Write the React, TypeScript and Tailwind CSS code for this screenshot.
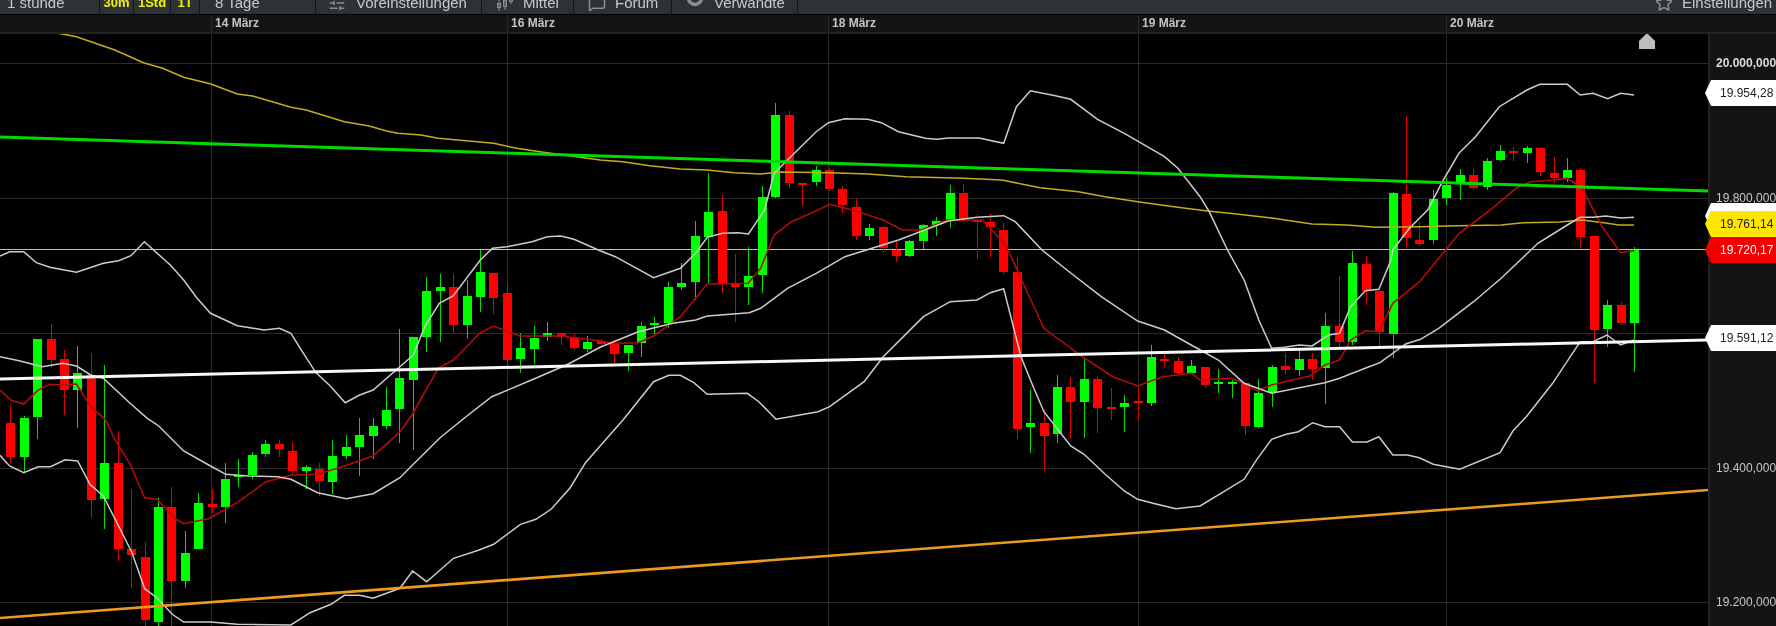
import { SlidersHorizontal, MessageSquare, Star } from "lucide-react";

// wick top, body top, body bottom, wick bottom, 1 = green / 0 = red
type Candle = [number, number, number, number, number];

const CANDLES: Candle[] = [
    [405, 423, 457, 463, 0], [416, 418, 457, 473, 1], [339, 339, 417, 439, 1], [324, 339, 360, 368, 0],
    [350, 359, 390, 415, 0], [346, 373, 390, 428, 1], [353, 375, 500, 518, 0], [365, 463, 499, 529, 1],
    [431, 463, 549, 561, 0], [489, 549, 555, 588, 0], [542, 557, 620, 626, 0], [498, 507, 622, 626, 1],
    [487, 507, 581, 626, 0], [531, 553, 581, 588, 1], [493, 503, 549, 549, 1], [489, 504, 507, 513, 0],
    [463, 479, 507, 523, 1], [459, 475, 477, 487, 1], [452, 455, 475, 479, 1], [440, 444, 454, 457, 1],
    [440, 444, 449, 457, 0], [442, 451, 471, 475, 0], [465, 467, 471, 489, 1], [463, 469, 481, 496, 0],
    [440, 456, 482, 494, 1], [435, 447, 456, 459, 1], [418, 435, 447, 476, 1], [418, 426, 436, 459, 1],
    [387, 410, 426, 429, 1], [329, 378, 409, 443, 1], [337, 337, 380, 450, 1], [277, 291, 337, 352, 1],
    [274, 287, 291, 342, 1], [274, 287, 325, 333, 0], [280, 296, 325, 339, 1], [250, 272, 297, 312, 1],
    [273, 273, 298, 314, 0], [282, 293, 360, 366, 0], [333, 348, 359, 373, 1], [326, 338, 349, 364, 1],
    [322, 333, 337, 341, 1], [333, 333, 337, 345, 0], [334, 338, 348, 350, 0], [336, 342, 349, 352, 1],
    [339, 341, 344, 346, 0], [340, 343, 354, 363, 0], [345, 345, 353, 371, 1], [322, 326, 343, 357, 1],
    [317, 323, 325, 336, 1], [282, 287, 323, 328, 1], [263, 283, 287, 290, 1], [221, 236, 282, 300, 1],
    [173, 212, 237, 283, 1], [195, 211, 283, 293, 0], [254, 284, 287, 322, 0], [247, 276, 287, 305, 1],
    [186, 197, 275, 293, 1], [103, 115, 197, 198, 1], [111, 115, 183, 188, 0], [183, 183, 184, 206, 0],
    [166, 170, 182, 186, 1], [168, 170, 189, 191, 0], [186, 189, 205, 213, 0], [199, 207, 236, 240, 0],
    [224, 228, 236, 240, 1], [226, 227, 248, 252, 0], [240, 250, 256, 262, 0], [240, 241, 256, 257, 1],
    [224, 225, 241, 249, 1], [217, 221, 225, 236, 1], [185, 193, 220, 228, 1], [184, 193, 219, 223, 0],
    [220, 220, 221, 259, 0], [214, 222, 227, 257, 0], [223, 230, 272, 274, 0], [257, 272, 429, 439, 0],
    [390, 423, 427, 453, 1], [410, 423, 436, 471, 0], [375, 387, 434, 443, 1], [377, 387, 402, 439, 0],
    [357, 379, 402, 438, 1], [377, 379, 408, 433, 0], [388, 407, 409, 420, 0], [395, 403, 407, 432, 1],
    [388, 401, 402, 420, 0], [345, 357, 403, 406, 1], [353, 359, 361, 367, 0], [357, 361, 373, 374, 0],
    [360, 366, 373, 374, 1], [367, 367, 385, 388, 0], [369, 382, 384, 393, 1], [380, 382, 383, 398, 1],
    [383, 383, 426, 435, 0], [379, 393, 427, 428, 1], [365, 367, 393, 407, 1], [353, 366, 370, 374, 0],
    [350, 359, 370, 376, 1], [353, 359, 369, 380, 0], [313, 326, 368, 404, 1], [276, 326, 342, 347, 0],
    [251, 263, 342, 345, 1], [256, 264, 291, 305, 0], [291, 291, 332, 349, 0], [192, 193, 334, 358, 1],
    [116, 194, 238, 248, 0], [222, 240, 244, 246, 0], [190, 199, 240, 244, 1], [178, 185, 198, 205, 1],
    [169, 175, 184, 200, 1], [169, 175, 188, 190, 0], [158, 161, 187, 190, 1], [145, 151, 160, 161, 1],
    [147, 151, 153, 161, 0], [146, 148, 153, 163, 1], [148, 148, 172, 176, 0], [157, 173, 178, 183, 0],
    [158, 170, 178, 182, 1], [168, 170, 237, 248, 0], [236, 236, 330, 383, 0], [300, 305, 329, 347, 1],
    [302, 305, 323, 325, 0], [247, 250, 323, 372, 1],
];

// line pieces were read off crops of the chart: [x0, y0, x scale, "x,y x,y ..."]
type Piece = [number, number, number, string];
const L = 0.3827;
const R = 0.3673;

const YELLOW: Piece[] = [
    [0, 0, L, "145,98 200,110 300,150 375,188 425,205 480,232 551,252 620,282 660,288 760,322 800,330 900,365 965,378 1010,393 1040,400 1100,405 1145,415 1290,430 1350,445 1420,457 1568,480"],
    [600, 0, L, "60,485 130,497 210,507 280,510 350,518 420,522 470,516 600,518 700,522 800,530 950,535 1050,540 1150,563 1250,575 1320,590 1405,605 1500,620"],
    [1200, 210, R, "20,3 100,12 200,25 305,42 400,45 480,52 600,50 700,47 820,45 880,38 980,36 1040,30 1100,38 1140,45 1182,45"],
];

const UPPER: Piece[] = [
    [0, 210, L, "0,138 25,125 62,125 95,158 130,172 200,187 270,160 310,152 342,137 377,95 445,165 480,210 515,265 550,310 620,347 690,360 730,355 760,370 790,425 825,487 865,530 902,578 940,555 975,540 1045,470 1080,435 1110,350 1148,280 1184,258 1255,150 1287,115 1325,110 1390,95 1430,80 1465,78 1500,88 1568,122"],
    [600, 210, L, "40,140 140,203 210,175 250,130 280,82 320,70 360,68 388,72 430,0"],
    [600, 0, L, "455,520 490,480 565,395 597,368 640,356 700,358 735,368 780,395 850,415 880,418 910,414 990,414 1055,430 1088,320 1125,272 1190,287 1230,298 1300,358 1370,400 1475,470 1510,505 1568,590"],
    [1200, 210, R, "25,5 75,120 120,210 160,330 195,415 230,412 270,405 305,408 350,375 380,370 410,290 450,242 487,238 520,150 525,120 570,55 620,0"],
    [1200, 0, R, "660,545 705,460 750,410 815,320 890,270 925,253 1000,253 1035,285 1070,280 1110,296 1145,280 1182,285"],
];

const LOWER: Piece[] = [
    [0, 416, L, "0,118 25,150 62,170 100,152 132,152 170,131 203,135 235,205 270,240 310,330 345,410 378,518 410,545 450,595 480,618 550,618 620,625 760,627 810,590 865,565 900,538 940,538 975,547 1045,517 1078,465 1115,497 1185,427 1250,403 1290,385 1360,325 1400,310 1440,280 1490,215 1530,140 1568,90"],
    [600, 210, L, "60,630 140,515 180,496 210,496 245,518 280,553 385,550 415,575 460,628 570,605 600,590 690,515 740,440 845,320 915,275 985,270 1020,248 1055,236 1100,440 1130,525 1160,605"],
    [600, 416, L, "1230,90 1265,115 1320,175 1370,225 1405,250 1450,263 1505,278 1568,270"],
    [1200, 416, R, "120,190 155,130 195,70 235,55 268,47 307,20 340,32 380,32 415,78 455,78 487,62 525,117 565,117 597,125 635,145 707,160 817,110 852,45 890,0"],
    [1200, 210, R, "960,520 1035,395 1070,395 1108,375 1145,405 1182,390"],
];

const MID: Piece[] = [
    [0, 210, L, "0,440 50,452 110,470 165,460 200,468 237,495 270,505 340,580 385,625"],
    [0, 416, L, "415,30 480,105 550,150 590,175 650,180 725,182 760,190 830,230 905,248 975,233 1045,185 1080,145 1150,65 1220,0"],
    [0, 210, L, "1285,560 1395,507 1480,465 1568,412"],
    [600, 210, L, "100,365 190,340 250,330 280,318 390,308 420,295 490,235 565,190 640,140 780,90 910,33 985,22 1055,17 1085,35 1155,120 1220,180 1310,260 1405,333 1475,360 1568,420"],
    [1200, 210, R, "50,450 120,520 195,550 340,518 380,505 460,470 490,458 560,402 600,388 650,355 745,275 820,205 920,100 1000,45 1035,22 1070,22 1105,18 1145,24 1182,22"],
];

const MA: Piece[] = [
    [0, 210, L, "0,540 28,570 62,582 100,540 130,523 165,525 200,522 237,590 275,628"],
    [0, 416, L, "300,70 340,145 378,245 410,250 460,310 480,323 545,308 620,260 695,197 760,178 830,175 900,150 975,120 1045,48 1075,0"],
    [0, 210, L, "1145,475 1185,450 1255,368 1289,348 1358,378 1465,378 1568,392"],
    [600, 210, L, "35,400 100,398 140,378 210,320 280,222 387,220 420,175 455,75 500,35 570,0"],
    [600, 0, L, "600,613 660,630"],
    [600, 210, L, "740,30 790,60 840,60 910,30 1000,30 1060,105 1120,255 1160,355 1260,440 1340,500 1405,528 1470,500 1545,490 1568,510"],
    [1200, 210, R, "85,505 121,520 155,542 195,525 300,497 340,465 380,450 410,390 450,362 487,365 525,280 598,215 706,70 790,0"],
    [1200, 0, R, "860,565 900,545 960,540 1000,535 1040,565"],
    [1200, 210, R, "1095,50 1145,128 1182,122"],
];

const points = (pieces: Piece[]) =>
    pieces
        .map(([x0, y0, sx, d]) =>
            d
                .split(" ")
                .map((p) => {
                    const [x, y] = p.split(",").map(Number);
                    return `${(x0 + x * sx).toFixed(1)},${(y0 + y / 3).toFixed(1)}`;
                })
                .join(" ")
        )
        .join(" ");

function Chart() {
    return (
        <svg width={1708} height={592} viewBox="0 34 1708 592" className="block shrink-0">
            {/* grid */}
            {[63, 198, 333, 468, 602].map((y) => (
                <line key={y} x1={0} x2={1708} y1={y + 0.5} y2={y + 0.5} stroke="#2a2a2a" />
            ))}
            {[211, 507, 828, 1138, 1446].map((x) => (
                <line key={x} x1={x + 0.5} x2={x + 0.5} y1={34} y2={626} stroke="#2a2a2a" />
            ))}
            <line x1={0} x2={1708} y1={249.5} y2={249.5} stroke="#c0c0c0" />

            {/* candles */}
            {CANDLES.map(([top, open, close, bot, up], i) => {
                const x = Math.round(10.3 + 13.42 * i);
                const fill = up ? "#00ff00" : "#ff0000";
                return (
                    <g key={i} fill={fill} shapeRendering="crispEdges">
                        <rect x={x} y={top} width={1} height={bot - top} fill={up ? "#00e000" : "#e00000"} />
                        <rect x={x - 4} y={open} width={9} height={Math.max(close - open, 2)} />
                    </g>
                );
            })}

            {/* indicators */}
            <polyline points={points(YELLOW)} fill="none" stroke="#c2ad1c" strokeWidth={1.6} />
            <polyline points={points(MA)} fill="none" stroke="#b00c0c" strokeWidth={1.6} />
            <polyline points={points(UPPER)} fill="none" stroke="#cccccc" strokeWidth={1.5} />
            <polyline points={points(LOWER)} fill="none" stroke="#cccccc" strokeWidth={1.5} />
            <polyline points={points(MID)} fill="none" stroke="#cccccc" strokeWidth={1.5} />

            {/* trend lines */}
            <line x1={0} y1={137} x2={1708} y2={191} stroke="#00dc00" strokeWidth={3} />
            <line x1={0} y1={379} x2={1708} y2={340} stroke="#f8f8f8" strokeWidth={3} />
            <line x1={0} y1={618} x2={1708} y2={490} stroke="#ec9a1e" strokeWidth={2.6} />

            {/* marker */}
            <polygon points="1647,33 1655,41 1655,49 1639,49 1639,41" fill="#bdbdbd" />
        </svg>
    );
}

function MittelIcon() {
    return (
        <svg width={18} height={26} viewBox="0 0 18 26" fill="none" stroke="#8a8f94" strokeWidth={1}>
            <path d="M3 9v12M9 6v14M15 6v8" />
            <rect x={1.5} y={13.5} width={3} height={4} />
            <rect x={7.5} y={10.5} width={3} height={6} />
            <rect x={13.5} y={8.5} width={3} height={3} />
        </svg>
    );
}

function RingIcon() {
    return (
        <svg width={18} height={26} viewBox="0 0 18 26" fill="none">
            <circle cx={9} cy={8} r={6.5} stroke="#8a8f94" strokeWidth={3.5} />
        </svg>
    );
}

function Cell({ className, children }: { className: string; children: React.ReactNode }) {
    return (
        <div className={`flex h-full shrink-0 items-center border-r border-[#14171a] ${className}`}>{children}</div>
    );
}

function Toolbar() {
    return (
        <div className="h-[15px] shrink-0 overflow-hidden border-b border-black bg-[#2d3237]">
            <div className="-mt-[10px] flex h-[26px] items-center text-[15px] text-[#c6cace]">
                <Cell className="w-[100px] pl-[7px]">1 stunde</Cell>
                <Cell className="w-[34px] justify-center text-[13px] font-bold text-[#f2f200]">30m</Cell>
                <Cell className="w-[37px] justify-center text-[13px] font-bold text-[#f2f200]">1Std</Cell>
                <Cell className="w-[29px] justify-center text-[13px] font-bold text-[#f2f200]">1T</Cell>
                <Cell className="w-[116px] pl-[15px]">8 Tage</Cell>
                <Cell className="w-[166px] gap-[10px] pl-[12px]">
                    <SlidersHorizontal className="h-[18px] w-[18px] text-[#8a8f94]" />
                    <span>Voreinstellungen</span>
                </Cell>
                <Cell className="w-[92px] gap-[9px] pl-[14px]">
                    <MittelIcon />
                    <span>Mittel</span>
                </Cell>
                <Cell className="w-[98px] gap-[9px] pl-[14px]">
                    <MessageSquare className="h-[18px] w-[18px] text-[#8a8f94]" />
                    <span>Forum</span>
                </Cell>
                <Cell className="w-[126px] gap-[10px] pl-[14px]">
                    <RingIcon />
                    <span>Verwandte</span>
                </Cell>
                <div className="ml-auto flex items-center gap-[9px] whitespace-nowrap">
                    <Star className="h-[18px] w-[18px] text-[#8a8f94]" />
                    <span className="w-[94px]">Einstellungen</span>
                </div>
            </div>
        </div>
    );
}

function DateRow() {
    const cell = "shrink-0 border-l border-[#2a2a2a] pl-[3px]";
    return (
        <div className="flex h-[19px] shrink-0 items-center overflow-hidden border-b-2 border-[#222] bg-[#141414] text-[12px] font-bold leading-[17px] text-[#c4c4c4]">
            <div className="w-[211px] shrink-0" />
            <div className={`${cell} w-[296px]`}>14 März</div>
            <div className={`${cell} w-[321px]`}>16 März</div>
            <div className={`${cell} w-[310px]`}>18 März</div>
            <div className={`${cell} w-[308px]`}>19 März</div>
            <div className={`${cell} w-[200px]`}>20 März</div>
        </div>
    );
}

const PENTAGON = "[clip-path:polygon(6px_0,100%_0,100%_100%,6px_100%,0_50%)]";

function Axis() {
    return (
        <div className="relative h-[592px] flex-1 border-l-2 border-[#222] bg-[#141414] text-[12px] leading-[14px] text-[#c8c8c8]">
            <div className="absolute left-[6px] top-[22px] whitespace-nowrap font-bold text-[#dcdcdc]">20.000,000</div>
            <div className="absolute left-[6px] top-[157px] whitespace-nowrap">19.800,000</div>
            <div className="absolute left-[6px] top-[427px] whitespace-nowrap">19.400,000</div>
            <div className="absolute left-[6px] top-[561px] whitespace-nowrap">19.200,000</div>

            {/* price badges */}
            <div className={`absolute -left-[5px] right-0 top-[46px] flex h-[26px] items-center overflow-hidden whitespace-nowrap bg-white pl-[15px] text-[#222] ${PENTAGON}`}>19.954,28</div>
            <div className={`absolute -left-[5px] right-0 top-[169px] h-[26px] bg-white ${PENTAGON}`} />
            <div className={`absolute -left-[5px] right-0 top-[177px] flex h-[26px] items-center overflow-hidden whitespace-nowrap bg-[#ffe600] pl-[15px] text-[#222] ${PENTAGON}`}>19.761,14</div>
            <div className={`absolute -left-[5px] right-0 top-[203px] flex h-[26px] items-center overflow-hidden whitespace-nowrap bg-[#f20000] pl-[15px] text-white ${PENTAGON}`}>19.720,17</div>
            <div className={`absolute -left-[5px] right-0 top-[291px] flex h-[26px] items-center overflow-hidden whitespace-nowrap bg-white pl-[15px] text-[#222] ${PENTAGON}`}>19.591,12</div>
        </div>
    );
}

export default function App() {
    return (
        <div className="flex h-[626px] w-[1776px] flex-col overflow-hidden bg-black font-['Liberation_Sans',Arial,sans-serif] blur-[0.4px]">
            <Toolbar />
            <DateRow />
            <div className="flex min-h-0 flex-1">
                <Chart />
                <Axis />
            </div>
        </div>
    );
}
